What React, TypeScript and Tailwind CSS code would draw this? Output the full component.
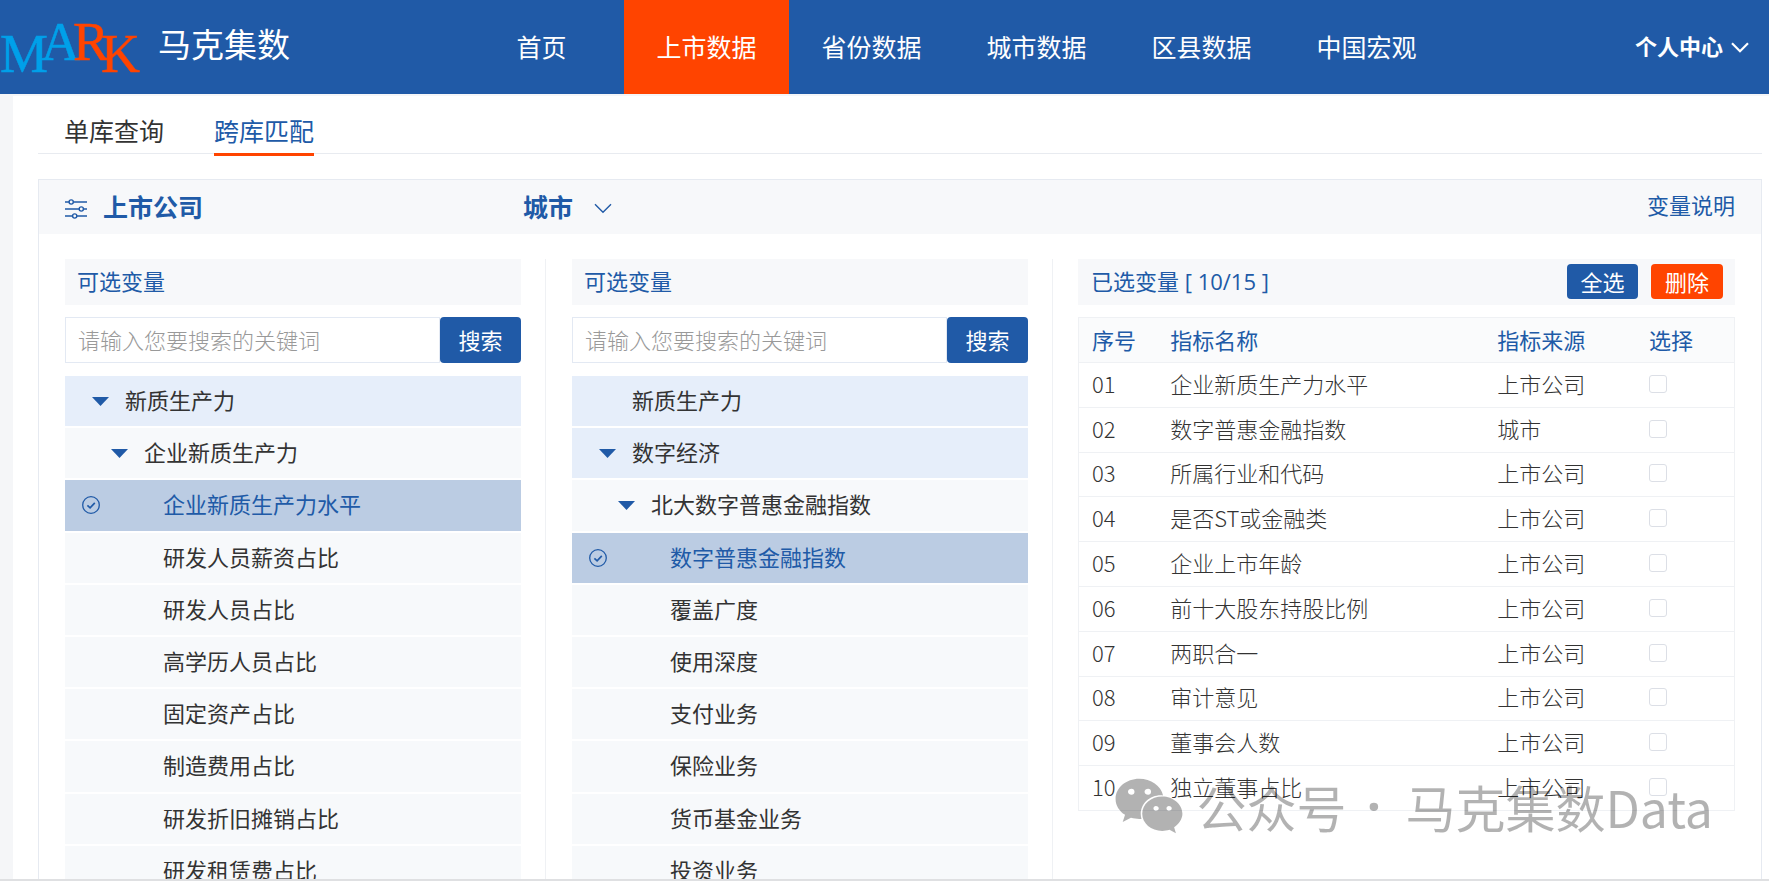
import { useState } from "react";
import { FaWeixin } from "react-icons/fa";
import { cva } from "class-variance-authority";
import clsx from "clsx";

type Level = 1 | 2 | 3;

interface TreeRow {
  label: string;
  level: Level;
  open?: boolean;
  selected?: boolean;
}

interface PickedRow {
  name: string;
  source: string;
}

const navItems = ["首页", "上市数据", "省份数据", "城市数据", "区县数据", "中国宏观"];
const activeNav = "上市数据";

const companyRows: TreeRow[] = [
  { label: "新质生产力", level: 1, open: true },
  { label: "企业新质生产力", level: 2, open: true },
  { label: "企业新质生产力水平", level: 3, selected: true },
  { label: "研发人员薪资占比", level: 3 },
  { label: "研发人员占比", level: 3 },
  { label: "高学历人员占比", level: 3 },
  { label: "固定资产占比", level: 3 },
  { label: "制造费用占比", level: 3 },
  { label: "研发折旧摊销占比", level: 3 },
  { label: "研发租赁费占比", level: 3 },
];

const cityRows: TreeRow[] = [
  { label: "新质生产力", level: 1 },
  { label: "数字经济", level: 1, open: true },
  { label: "北大数字普惠金融指数", level: 2, open: true },
  { label: "数字普惠金融指数", level: 3, selected: true },
  { label: "覆盖广度", level: 3 },
  { label: "使用深度", level: 3 },
  { label: "支付业务", level: 3 },
  { label: "保险业务", level: 3 },
  { label: "货币基金业务", level: 3 },
  { label: "投资业务", level: 3 },
];

const pickedRows: PickedRow[] = [
  { name: "企业新质生产力水平", source: "上市公司" },
  { name: "数字普惠金融指数", source: "城市" },
  { name: "所属行业和代码", source: "上市公司" },
  { name: "是否ST或金融类", source: "上市公司" },
  { name: "企业上市年龄", source: "上市公司" },
  { name: "前十大股东持股比例", source: "上市公司" },
  { name: "两职合一", source: "上市公司" },
  { name: "审计意见", source: "上市公司" },
  { name: "董事会人数", source: "上市公司" },
  { name: "独立董事占比", source: "上市公司" },
];

const treeRow = cva("flex w-full items-center text-left", {
  variants: {
    level: {
      1: "pl-[27px]",
      2: "pl-[46px]",
      3: "pl-[17px]",
    },
    selected: {
      true: "bg-[#bbcce3] text-[#205aa7]",
      false: "text-[#333]",
    },
  },
  compoundVariants: [
    { level: 1, selected: false, class: "bg-[#e6eefa]" },
    { level: [2, 3], selected: false, class: "bg-[#f7f9fb]" },
  ],
});

function Logo() {
  return (
    <svg viewBox="0 0 142 80" className="h-20 w-[142px] shrink-0 overflow-visible" role="img" aria-label="MARK">
      <g fontFamily="Liberation Serif, serif" fontSize="54" strokeWidth="0.5">
        <g fill="#00a0e9" stroke="#00a0e9">
          <text x="0" y="65">M</text>
          <text x="41" y="53">A</text>
        </g>
        <g fill="#ff4400" stroke="#ff4400">
          <text x="73" y="53">R</text>
          <text x="101" y="65">K</text>
        </g>
      </g>
    </svg>
  );
}

function Chevron({ strokeWidth, className }: { strokeWidth: number; className?: string }) {
  return (
    <svg
      viewBox="0 0 18 11"
      className={clsx("h-[11px] w-[18px]", className)}
      fill="none"
      stroke="currentColor"
      strokeWidth={strokeWidth}
    >
      <path d="M1 1.200l8 8 8-8" />
    </svg>
  );
}

function FilterIcon() {
  return (
    <svg viewBox="0 -2 22 22" className="size-[22px] overflow-visible" fill="none" stroke="#205aa7" strokeWidth="1.4">
      <path d="M0 4h4M8.500 4H22M0 11h14M18.500 11H22M0 18h7.500M12 18h10" />
      <circle cx="6.200" cy="4" r="2.100" />
      <circle cx="16.300" cy="11" r="2.100" />
      <circle cx="9.700" cy="18" r="2.100" />
    </svg>
  );
}

function CheckedIcon() {
  return (
    <svg viewBox="0 0 18 18" className="size-[18px]" fill="none" stroke="#205aa7">
      <circle cx="9" cy="9" r="8.300" strokeWidth="1.300" />
      <path d="M5.400 9.300l2.700 2.500 4.700-4.900" strokeWidth="1.700" />
    </svg>
  );
}

function Header() {
  return (
    <header className="flex h-[94px] shrink-0 items-center bg-[#205aa7] pr-5 text-white">
      <Logo />
      <h1 className="ml-4 w-[301px] pb-[6px] text-[33px]">马克集数</h1>
      <nav className="flex h-full text-[25px]">
        {navItems.map((item) => (
          <a
            key={item}
            href="#"
            className={clsx(
              "flex w-[165px] items-center justify-center",
              item === activeNav && "bg-[#ff4400]",
            )}
          >
            {item}
          </a>
        ))}
      </nav>
      <button type="button" className="ml-auto flex items-center gap-2 pb-1 text-[22px] font-bold">
        个人中心
        <Chevron strokeWidth={2.2} className="mt-1" />
      </button>
    </header>
  );
}

function VariablePicker({ rows }: { rows: TreeRow[] }) {
  return (
    <>
      <h3 className="flex h-[46px] items-center bg-[#f7f8fa] px-3 pb-[3px] text-[#205aa7]">可选变量</h3>
      <form className="mt-3 flex h-[46px]" onSubmit={(e) => e.preventDefault()}>
        <input
          type="text"
          aria-label="搜索"
          placeholder="请输入您要搜索的关键词"
          className="min-w-0 flex-1 border border-[#e3e9f3] px-3 pb-[2px] font-light outline-none placeholder:text-[#999]"
        />
        <button type="submit" className="w-[81px] rounded bg-[#205aa7] pb-[2px] text-white">
          搜索
        </button>
      </form>
      <ul className="mt-[13px] grid h-[520px] auto-rows-fr gap-[2px]">
        {rows.map((row) => (
          <li key={row.label} className="flex">
            <button
              type="button"
              className={treeRow({ level: row.level, selected: Boolean(row.selected) })}
            >
              {row.level === 3 ? (
                <span className="w-[81px]">{row.selected && <CheckedIcon />}</span>
              ) : (
                <span className="w-[33px]">
                  {row.open && (
                    <svg viewBox="0 0 17 9" className="h-[9px] w-[17px]" fill="#205aa7">
                      <path d="M0 0h17L8.500 9z" />
                    </svg>
                  )}
                </span>
              )}
              <span className="pb-[3px]">{row.label}</span>
            </button>
          </li>
        ))}
      </ul>
    </>
  );
}

function PickedTable() {
  const [checked, setChecked] = useState<string[]>([]);

  const toggle = (name: string) =>
    setChecked((prev) => (prev.includes(name) ? prev.filter((n) => n !== name) : [...prev, name]));

  return (
    <>
      <div className="flex h-[46px] items-center gap-[13px] bg-[#f7f8fa] px-3 pb-[2px] text-[#205aa7]">
        <h3 className="mr-auto pl-px">
          已选变量<span className="font-['Open_Sans',sans-serif]"> [ 10/15 ]</span>
        </h3>
        <button
          type="button"
          className="h-[35px] w-[71px] rounded bg-[#205aa7] leading-[34px] text-white"
          onClick={() => setChecked(pickedRows.map((r) => r.name))}
        >
          全选
        </button>
        <button
          type="button"
          className="h-[35px] w-[72px] rounded bg-[#ff4400] leading-[34px] text-white"
        >
          删除
        </button>
      </div>
      <table className="mt-3 h-[494px] w-full table-fixed border border-[#eff1f4] text-left leading-8">
        <thead className="bg-[#fafbfc] text-[#205aa7]">
          <tr className="h-[45px] border-b border-[#eff1f4]">
            <th className="w-[12%] pb-[3px] pl-[13px] font-normal">序号</th>
            <th className="pb-[3px] pl-[13px] font-normal">指标名称</th>
            <th className="w-[23%] pb-[3px] pl-3 font-normal">指标来源</th>
            <th className="w-[15%] pb-[3px] pl-[13px] font-normal">选择</th>
          </tr>
        </thead>
        <tbody className="font-light text-[#333]">
          {pickedRows.map((row, i) => (
            <tr key={row.name} className="border-b border-[#eff1f4]">
              <td className="pb-1 pl-[13px]">{String(i + 1).padStart(2, "0")}</td>
              <td className="pb-1 pl-[13px]">{row.name}</td>
              <td className="pb-1 pl-3">{row.source}</td>
              <td className="pb-[2px] pl-[13px]">
                <input
                  type="checkbox"
                  aria-label={row.name}
                  checked={checked.includes(row.name)}
                  onChange={() => toggle(row.name)}
                  className="block size-[18px] appearance-none rounded-[3px] border border-[#dcdfe6] bg-white checked:bg-[#205aa7]"
                />
              </td>
            </tr>
          ))}
        </tbody>
      </table>
    </>
  );
}

// 公众号水印，浮在表格上方
function Watermark() {
  return (
    <div className="pointer-events-none absolute right-14 bottom-10 flex items-center text-[50px] leading-[68px] whitespace-nowrap text-black/30">
      <FaWeixin className="mr-3 size-[70px]" />
      <span>公众号</span>
      <span className="w-[59px] pr-1 text-center font-['Open_Sans',sans-serif] font-bold">·</span>
      <span>马克集数Data</span>
    </div>
  );
}

export default function App() {
  return (
    <div className="relative flex h-screen flex-col overflow-hidden bg-[#f5f6f8] font-['Noto_Sans_CJK_SC',sans-serif] text-[22px]">
      <Header />
      <main className="mt-[2px] ml-[13px] min-h-0 flex-1 overflow-hidden bg-white pr-[7px] pl-[25px]">
        <div className="flex h-[58px] gap-[50px] border-b border-[#e8ebf0] pl-[26px] text-[25px] leading-10">
          <a href="#" className="pt-[14px] text-[#333]">
            单库查询
          </a>
          <a href="#" className="-mb-[3px] border-b-[3px] border-[#ff4400] pt-[14px] text-[#205aa7]">
            跨库匹配
          </a>
        </div>

        <section className="mt-[25px] border border-[#e6eaf1]">
          <div className="flex h-[54px] items-center bg-[#f7f8fa] px-[26px] text-[#205aa7]">
            <FilterIcon />
            <h2 className="ml-4 w-[420px] text-[25px] font-bold">上市公司</h2>
            <div className="relative">
              <select
                aria-label="城市"
                className="w-[89px] appearance-none bg-transparent text-[25px] font-bold outline-none"
              >
                <option>城市</option>
              </select>
              <Chevron
                strokeWidth={1.4}
                className="pointer-events-none absolute top-[15px] right-0"
              />
            </div>
            <a href="#" className="ml-auto pb-[6px]">
              变量说明
            </a>
          </div>

          <div className="mx-[26px] mt-[25px] grid grid-cols-[481fr_507fr_682fr]">
            <div className="border-r border-[#eff1f4] pr-6">
              <VariablePicker rows={companyRows} />
            </div>
            <div className="border-r border-[#eff1f4] pr-6 pl-[26px]">
              <VariablePicker rows={cityRows} />
            </div>
            <div className="pl-[25px]">
              <PickedTable />
            </div>
          </div>
        </section>
      </main>
      <div className="h-[2px] shrink-0 bg-[#dfe0e2]" />
      <Watermark />
    </div>
  );
}
